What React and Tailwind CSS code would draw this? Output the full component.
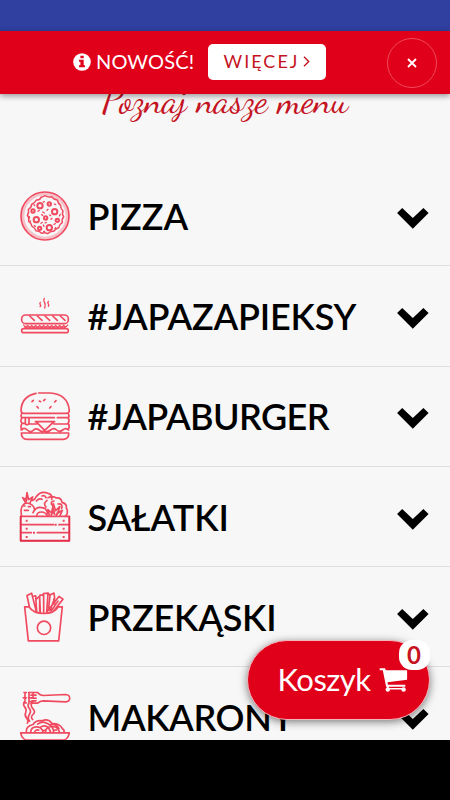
import React from "react";

function FoodIcon({ box, children }) {
  return (
    <svg
      viewBox={box}
      className="h-[50px] w-[50px] shrink-0 overflow-visible text-[#f04a60]"
      fill="none"
      stroke="currentColor"
      strokeWidth="5"
      strokeLinecap="round"
      strokeLinejoin="round"
    >
      {children}
    </svg>
  );
}

const slices = [
  [90, 77, 8], [118, 72, 5], [134, 95, 8], [69, 93, 5], [79, 119, 8],
  [107, 114, 5], [142, 121, 5], [118, 143, 8], [89, 145, 5],
];

function Pizza() {
  return (
    <FoodIcon box="30 33 150 150">
      <circle cx="105" cy="108" r="72" />
      <circle cx="105" cy="108" r="66" strokeWidth="8" opacity="0.3" />
      <path strokeWidth="4.5" d="M105 47q10 6 20 3q7 9 17 10q2 10 10 16q-1 9 7 17q-4 8 2 17q-7 8-4 18q-9 5-11 15q-10 2-15 11q-10-1-18 7q-9-5-18-1q-7-8-17-8q-3-9-12-13q-1-9-10-15q3-10-4-18q6-8 3-18q9-5 10-15q9-3 14-13q10 1 14-8q6-2 12-5Z" />
      {slices.map(([x, y, r]) => (
        <circle key={x + "-" + y} cx={x} cy={y} r={r} strokeWidth="6" />
      ))}
      <path strokeWidth="4" d="M72 74l2 3M103 65l-3 1M133 72l4 2M84 94l4-3M98 96l5 3M114 88l-3 3M119 105l3 2M151 103l-3 5M57 109l2 4M62 123l-2 3M95 104l3 2M93 130l4-3M100 135l2 4M109 127l-4 2M132 133l4-2M137 143l-2 3M73 137l3 2M104 154l-3 1M123 118l3-3" />
    </FoodIcon>
  );
}

function Sandwich() {
  return (
    <FoodIcon box="30 19 150 150">
      <rect x="35" y="91" width="140" height="26" rx="12" />
      <path d="M59 94l14 13M82 94l14 13M105 94l14 13M128 94l14 13M151 94l14 13" />
      <rect x="35" y="132" width="140" height="12" rx="6" />
      <path strokeWidth="4" d="M41 121q6 10 12 1q6 9 12 0q6 9 12 0q6 9 12 0q6 9 12 0q6 9 12 0q6 9 12 0q6 9 12 0q6 9 12 0q6 9 12 0q6 9 12-1M44 130h122" />
      <path strokeWidth="4" d="M91 53q-3 4 0 7t-1 6M103 41q-4 6 0 11t1 18M115 50q-3 4 0 8t0 7" />
    </FoodIcon>
  );
}

function Burger() {
  return (
    <FoodIcon box="30 20 150 150">
      <path d="M78 27Q35 36 33 78q0 9 8 9h129q8 0 8-9Q173 29 120 26H86M66 52l4-4M92 52l-4-2M101 49l4-4M134 53l4-4M81 67l4 4M119 71l4-4" />
      <path d="M35 88q-4 6 0 12M175 88q4 6 0 12M35 100h98M142 100h33M46 101v18q7 5 11-2v-16M35 102q-6 11 3 15h8M57 119h23M131 119h42q7-9 2-18M76 112h58M78 112l26 26 28-26M35 119q-5 11 2 17M176 119q4 10-2 17" />
      <path d="M33 137q9-10 19 0t19 0q8-7 16 0t15 3q10 5 20-3t18 0 18 0 18 0M34 146h142q2 18-16 19H52q-18 0-18-19" />
    </FoodIcon>
  );
}

function Salad() {
  return (
    <FoodIcon box="30 21 150 150">
      <path d="M35 94q-7-32 13-40 24 1 26 22M46 52l-8-14 10 6 3-21 5 21 12-8-8 18M43 76h12M55 65h6M42 63h3M67 46q8-2 11-10 14-20 36-11 13 2 11 18M79 48q8-9 17-5M96 33q9-3 12 5M114 38q15-7 25 1 14-2 17 13 15 4 13 17 8 15-3 25M111 46q-13 10-3 20M132 48q-11 2-7 11M144 57q15-2 11 13M69 83q9-20 27-15 13 0 17 18M80 93q1-12 14-12t18 12M118 92l-4-18 11 10 5-28 7 21 12-12-5 19 13-8-7 16" />
      <path strokeWidth="6" d="M124 90l3-10M139 90l5-8M130 72l3 15M48 50l3-14" />
      <path d="M32 94h146v74H32zM32 119h99M147 119h31M32 143h32M82 143h96" />
      <path strokeWidth="6" strokeLinecap="square" d="M50 107v0M161 107v0M50 131v0M161 131v0M50 156v0M161 156v0M137 119v0M72 143v0" />
      <path className="text-[#e1304c]" d="M32 95v72h146V95" />
    </FoodIcon>
  );
}

function Fries() {
  return (
    <FoodIcon box="30 21.6 150 150">
      <path d="M44 66l11 102h91l11-102h-12Q133 86 102 86 69 86 57 66Z" />
      <circle cx="102" cy="129" r="20" />
      <path d="M58 65l-7-33 14-7 14 56M67 35l10-2 3 48M79 43l10-9 2 50M90 31h11v54M101 40l-1-14 14-1-4 58M115 25l5 7-4 37M121 30l11-5 2 15-14 38M131 43q6 4 2 14M110 82l37-47 12 8-27 34M89 43v36M124 78l20-29" />
    </FoodIcon>
  );
}

function Pasta() {
  return (
    <FoodIcon box="30 37.5 150 150">
      <path d="M67 39h16q7 9 17 9l67-3q12 1 12 11t-12 11l-67-3q-10 0-17 7H63M63 47h15M66 56h12M66 64h12M56 39h13v16H56M42 39h7M40 55h9M42 70h7M60 66h9" />
      <path d="M45 41v24q-8 9-1 17t3 17 3 17 2 15M57 39v31q-6 9 1 17t0 18 1 20M66 70q-6 9 3 18t0 17-1 15" />
      <path d="M32 160h146q-3 16-15 22H48q-13-6-16-22M49 158q-2-18 20-23 10-14 27-11 19-8 30 8 22-1 31 15 7 4 5 11M62 158q1-16 17-16t20 15M74 158q2-9 12-6M83 134q15-12 31-1 16 8 17 25M93 142q15-8 23 4t4 12M107 157q0-15 18-16t23 16M118 136q21-5 29 12M99 158q-1-6 7-6M130 157q1-7 9-5" />
    </FoodIcon>
  );
}

function Chevron() {
  return (
    <svg viewBox="0 0 32 21" className="mt-[5px] h-[21px] w-8 shrink-0" fill="#000">
      <path d="M.1 5 5.2 .1 15.8 10 26.4 .1 31.6 5 15.8 20.7Z" />
    </svg>
  );
}

function InfoMark() {
  return (
    <svg viewBox="0 0 18 18" className="-mt-[2px] h-[18px] w-[18px]">
      <circle cx="9" cy="9" r="8.8" fill="#fff" />
      <path fill="#e1001a" d="M7.4 2.8h3.3v2.5H7.4zM6 6.8h4.7v5.5H12v2H6v-2h1.4V8.7H6z" />
    </svg>
  );
}

const menu = [
  ["PIZZA", Pizza, "tracking-normal"],
  ["#JAPAZAPIEKSY", Sandwich, "tracking-[-0.2px]"],
  ["#JAPABURGER", Burger, "tracking-[-0.6px]"],
  ["SAŁATKI", Salad, "tracking-normal"],
  ["PRZEKĄSKI", Fries, "tracking-[-0.2px]"],
  ["MAKARONY", Pasta, "tracking-[-0.4px]"],
];

export default function App() {
  return (
    <div className="relative flex h-[800px] w-[450px] flex-col overflow-hidden bg-[#f7f7f7] font-['Lato',sans-serif]">
      <div className="h-[31px] shrink-0 bg-[#2f40a0]" />
      <header className="z-10 flex h-[63px] shrink-0 items-center bg-[#e1001a] pr-[13px] pl-[73px] text-white shadow-[0_2px_6px_rgba(0,0,0,0.4)]">
        <InfoMark />
        <span className="-mt-1 ml-[5px] w-[112px] text-[20px] leading-6 tracking-[0.15px] whitespace-nowrap">NOWOŚĆ!</span>
        <button className="-mt-[2px] flex h-9 w-[118px] items-center justify-center gap-[4px] rounded-[5px] bg-white text-[18px] tracking-[2px] text-[#c5131f]">
          <span>WIĘCEJ</span>
          <svg viewBox="0 0 7 11" className="h-[11px] w-[7px]" fill="none" stroke="currentColor" strokeWidth="1.4">
            <path d="M1 .8 5.7 5.5 1 10.2" />
          </svg>
        </button>
        <button className="ml-auto flex h-[50px] w-[50px] items-center justify-center rounded-full border border-[#f04a5a]">
          <svg viewBox="0 0 10 10" className="h-[10px] w-[10px]" stroke="#fff" strokeWidth="1.8">
            <path d="M1 1l8 8M9 1 1 9" />
          </svg>
        </button>
      </header>
      <main className="flex h-[646px] shrink-0 flex-col">
        <div className="flex h-[72px] shrink-0 justify-center">
          <h1 className="-mt-[14px] h-10 text-[37.5px] leading-10 font-normal whitespace-nowrap text-[#c5131f] font-['Dancing_Script',cursive]">
            Poznaj nasze menu
          </h1>
        </div>
        {menu.map(([name, Icon, spacing]) => (
          <div key={name} className="flex h-[100.3px] shrink-0 items-center border-b border-[#dedede] pr-[21px] pl-5">
            <Icon />
            <h2 className={`ml-[17.6px] flex-1 text-[36px] leading-10 font-semibold whitespace-nowrap text-black ${spacing}`}>{name}</h2>
            <Chevron />
          </div>
        ))}
      </main>
      <div className="z-10 h-[60px] shrink-0 bg-black" />
      <button className="absolute top-[640px] left-[246.5px] z-20 flex h-[79.5px] w-[183px] items-center rounded-[40px] border border-[#f5b5bc] bg-[#e1001a] pl-[30px] text-white shadow-[0_2px_9px_rgba(0,0,0,0.5)]">
        <span className="-mt-[2px] w-[101px] text-left text-[31px] leading-10 tracking-[-0.5px]">Koszyk</span>
        <svg viewBox="0 0 29 26" className="h-[26px] w-[29px]" fill="#fff">
          <path d="M.7 1.2h5.2l1 2h21.2v9.6L8.5 15.3l.4 2.5h17.4v2H7.1L3.8 3.2H.7z" />
          <circle cx="8.8" cy="22.5" r="2.2" />
          <circle cx="24.6" cy="22.5" r="2.2" />
          <path d="M8 18.5h1.7V23H8zM8 21h17v1.5H8z" />
        </svg>
        <span className="absolute -top-px -right-px flex h-[30px] w-[31px] items-center justify-center rounded-[13px] bg-white text-[24px] leading-none font-bold text-[#c5131f]">
          0
        </span>
      </button>
    </div>
  );
}
